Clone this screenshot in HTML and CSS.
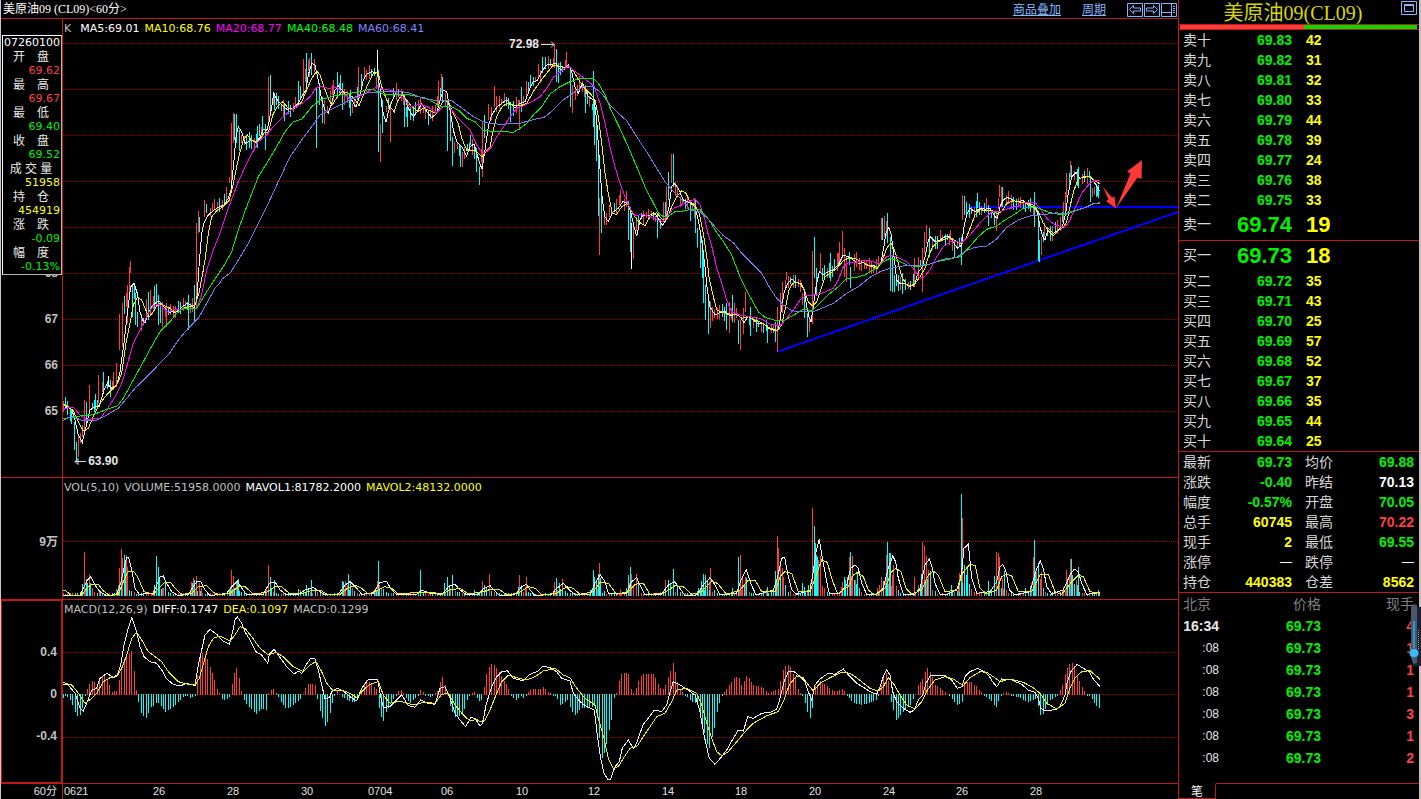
FILE: index.html
```html
<!DOCTYPE html>
<html lang="zh-CN">
<head>
<meta charset="utf-8">
<title>美原油09 (CL09)</title>
<link rel="stylesheet" href="styles.css">
</head>
<body>
<div class="app">
  <main class="charts">
    <header class="bar">
      <h1 class="bar-title">美原油09 (CL09)&lt;60分&gt;</h1>
      <nav class="bar-nav">
        <a href="#overlay">商品叠加</a>
        <a href="#period">周期</a>
        <span class="bar-buttons">
          <button type="button" class="icon-btn" aria-label="向左"><svg width="16" height="15" viewBox="0 0 16 15"><path d="M.5 1.500h15v13H.5zM2.500 7.500L6.500 3.500V6h7v3h-7v2.500z"/></svg></button>
          <button type="button" class="icon-btn" aria-label="向右"><svg width="16" height="15" viewBox="0 0 16 15"><path d="M.5 1.500h15v13H.5zM13.500 7.500L9.500 3.500V6h-7v3h7v2.500z"/></svg></button>
          <button type="button" class="icon-btn" aria-label="布局"><svg width="16" height="15" viewBox="0 0 16 15"><path d="M.5 1.500h15v13H.5zM10.500 1.500v13M.5 10.500h10M12 4.500h2M12 6.500h2M12 8.500h2M12 10.500h2"/></svg></button>
        </span>
      </nav>
    </header>

    <section class="panel panel-k">
      <div class="axis axis-k"><span>68</span><span>67</span><span>66</span><span>65</span></div>
      <div class="plot">
        <svg id="k" class="canvas" viewBox="63 19 1115 458" preserveAspectRatio="none"></svg>
        <p class="legend"><span class="dim">K</span><span class="first">MA5:69.01</span><span class="yellow">MA10:68.76</span><span class="magenta">MA20:68.77</span><span class="lime">MA40:68.48</span><span class="blue">MA60:68.41</span></p>
        <span class="mark mark-high">72.98<svg width="14" height="7" viewBox="0 0 14 7"><path d="M0 3.500h13M10 .5l3 3-3 3"/></svg></span>
        <span class="mark mark-low"><svg width="12" height="7" viewBox="0 0 12 7"><path d="M12 3.500H1M4 .5l-3 3 3 3z"/></svg>63.90</span>
      </div>
      <dl class="quote">
        <dt class="stamp">07260100</dt>
        <dt>开　盘</dt><dd class="red">69.62</dd>
        <dt>最　高</dt><dd class="red">69.67</dd>
        <dt>最　低</dt><dd class="green">69.40</dd>
        <dt>收　盘</dt><dd class="green">69.52</dd>
        <dt>成 交 量</dt><dd class="yellow">51958</dd>
        <dt>持　仓</dt><dd class="yellow">454919</dd>
        <dt>涨　跌</dt><dd class="green">-0.09</dd>
        <dt>幅　度</dt><dd class="green">-0.13%</dd>
      </dl>
    </section>

    <section class="panel">
      <div class="axis axis-vol"><span>9万</span></div>
      <div class="plot">
        <svg id="vol" class="canvas" viewBox="63 478 1115 121" preserveAspectRatio="none"></svg>
        <p class="legend"><span class="dim">VOL(5,10)</span><span class="dim">VOLUME:51958.0000</span><span>MAVOL1:81782.2000</span><span class="yellow">MAVOL2:48132.0000</span></p>
      </div>
    </section>

    <section class="panel">
      <div class="axis axis-macd"><span>0.4</span><span>0</span><span>-0.4</span></div>
      <div class="plot">
        <svg id="macd" class="canvas" viewBox="63 600 1115 183" preserveAspectRatio="none"></svg>
        <p class="legend"><span class="dim">MACD(12,26,9)</span><span>DIFF:0.1747</span><span class="yellow">DEA:0.1097</span><span class="dim">MACD:0.1299</span></p>
      </div>
    </section>

    <footer class="dates">
      <span class="dates-unit">60分</span>
      <div class="dates-row"><span>0621</span><span>26</span><span>28</span><span>30</span><span>0704</span><span>06</span><span>10</span><span>12</span><span>14</span><span>18</span><span>20</span><span>24</span><span>26</span><span>28</span></div>
    </footer>
  </main>

  <aside class="side">
    <header class="side-head">
      <h2>美原油09(CL09)</h2>
      <button type="button" class="icon-btn restore" aria-label="还原"><svg width="16" height="14" viewBox="0 0 16 14"><path d="M.5 .5h15v13H.5zM3.500 3.500h9v7h-9zM3.500 4.500h9"/></svg></button>
    </header>
    <div class="ratio"><span class="ratio-sell"></span><span class="ratio-buy"></span></div>

    <table class="book">
      <tbody>
        <tr><th>卖十</th><td>69.83</td><td>42</td></tr>
        <tr><th>卖九</th><td>69.82</td><td>31</td></tr>
        <tr><th>卖八</th><td>69.81</td><td>32</td></tr>
        <tr><th>卖七</th><td>69.80</td><td>33</td></tr>
        <tr><th>卖六</th><td>69.79</td><td>44</td></tr>
        <tr><th>卖五</th><td>69.78</td><td>39</td></tr>
        <tr><th>卖四</th><td>69.77</td><td>24</td></tr>
        <tr><th>卖三</th><td>69.76</td><td>38</td></tr>
        <tr><th>卖二</th><td>69.75</td><td>33</td></tr>
        <tr class="top"><th>卖一</th><td>69.74</td><td>19</td></tr>
      </tbody>
    </table>
    <table class="book">
      <tbody>
        <tr class="top"><th>买一</th><td>69.73</td><td>18</td></tr>
        <tr><th>买二</th><td>69.72</td><td>35</td></tr>
        <tr><th>买三</th><td>69.71</td><td>43</td></tr>
        <tr><th>买四</th><td>69.70</td><td>25</td></tr>
        <tr><th>买五</th><td>69.69</td><td>57</td></tr>
        <tr><th>买六</th><td>69.68</td><td>52</td></tr>
        <tr><th>买七</th><td>69.67</td><td>37</td></tr>
        <tr><th>买八</th><td>69.66</td><td>35</td></tr>
        <tr><th>买九</th><td>69.65</td><td>44</td></tr>
        <tr><th>买十</th><td>69.64</td><td>25</td></tr>
      </tbody>
    </table>
    <table class="stats">
      <tbody>
        <tr><th>最新</th><td class="green">69.73</td><th>均价</th><td class="green">69.88</td></tr>
        <tr><th>涨跌</th><td class="green">-0.40</td><th>昨结</th><td>70.13</td></tr>
        <tr><th>幅度</th><td class="green">-0.57%</td><th>开盘</th><td class="green">70.05</td></tr>
        <tr><th>总手</th><td class="yellow">60745</td><th>最高</th><td class="red">70.22</td></tr>
        <tr><th>现手</th><td class="yellow">2</td><th>最低</th><td class="green">69.55</td></tr>
        <tr><th>涨停</th><td class="none">—</td><th>跌停</th><td class="none">—</td></tr>
        <tr><th>持仓</th><td class="yellow">440383</td><th>仓差</th><td class="yellow">8562</td></tr>
      </tbody>
    </table>
    <div class="ticks-wrap">
      <table class="ticks">
        <thead><tr><th>北京</th><th>价格</th><th>现手</th></tr></thead>
        <tbody>
          <tr><td class="full">16:34</td><td>69.73</td><td>4</td></tr>
          <tr><td>:08</td><td>69.73</td><td>1</td></tr>
          <tr><td>:08</td><td>69.73</td><td>1</td></tr>
          <tr><td>:08</td><td>69.73</td><td>1</td></tr>
          <tr><td>:08</td><td>69.73</td><td>3</td></tr>
          <tr><td>:08</td><td>69.73</td><td>1</td></tr>
          <tr><td>:08</td><td>69.73</td><td>2</td></tr>
        </tbody>
      </table>
      <svg class="gauge" width="12" height="62" viewBox="0 0 12 62" aria-hidden="true">
        <path d="M7 3h5v59H4z" fill="#1d2233"/>
        <path d="M2 3l3-3 3 1v58l-4 1-2-6z" fill="#4d5666"/>
        <path d="M9.500 26v20" stroke="#9aa85a" stroke-dasharray="1 1"/>
        <path d="M5 17v28" stroke="#1e9be8" stroke-width="2"/>
        <circle cx="5" cy="49" r="5" fill="#2a6f98"/><circle cx="5" cy="49" r="4" fill="#3fbdf2"/>
      </svg>
    </div>
    <div class="tabs"><button type="button" class="tab">笔</button><span class="tabs-line"></span></div>
  </aside>
</div>
<script src="chart.js"></script>
</body>
</html>
```
FILE: styles.css
```css
* { box-sizing: border-box; }
body { margin: 0; background: #000; color: #fff; font-family: "DejaVu Sans", "Noto Sans CJK SC", sans-serif; font-size: 11px; }
h1, h2, p, dl, dd { margin: 0; font-weight: 400; }
button { font: inherit; color: inherit; background: none; border: 0; padding: 0; cursor: pointer; }
.dim { color: #c0c0c0; }
.yellow { color: #ff0; }
.magenta { color: #f0f; }
.lime { color: #0f0; }
.green { color: #00f000; }
.blue { color: #8080ff; }
.red { color: #ff4040; }

.app { display: grid; grid-template-columns: minmax(0, 1fr) 240px; min-height: 100vh; border-left: 1px solid #c8c8c8; border-right: 2px solid #c9bfbf; }

.charts { display: grid; grid-template-rows: 19px minmax(0, 459fr) minmax(0, 122fr) minmax(0, 184fr) 15px; border-right: 1px solid #c01818; }
.bar { display: flex; justify-content: space-between; align-items: center; padding-left: 2px; border-bottom: 1px solid #c01818; line-height: 18px; }
.bar-title { font-family: "Liberation Serif", "Noto Sans CJK SC", serif; font-size: 12px; }
.bar-nav { display: flex; align-items: center; gap: 21px; font-family: "Noto Sans CJK SC", sans-serif; font-size: 12px; }
.bar-nav a { color: #80b8ff; }
.bar-buttons { display: flex; gap: 1px; padding-right: 1px; }
.icon-btn { display: block; }
.icon-btn svg { display: block; fill: none; stroke: #80b8ff; }

.panel { position: relative; display: grid; grid-template-columns: 62px minmax(0, 1fr); border-bottom: 1px solid #c01818; }
.axis { display: grid; justify-items: end; align-items: center; padding-right: 4px; border-right: 1px solid #c01818; color: #c0c0c0; font: bold 12px/1 "Liberation Sans", "Noto Sans CJK SC", sans-serif; }
.axis-k { grid-template-rows: repeat(4, 46fr) 43fr; padding-top: 231px; }
.axis-vol { grid-template-rows: 54fr 20fr 47fr; }
.axis-vol span { grid-row: 2; }
.axis-macd { grid-template-rows: 30fr 42fr 42fr 42fr 25fr; border: 1px solid #c01818; border-right-width: 2px; }
.axis-macd span:nth-child(1) { grid-row: 2; }
.axis-macd span:nth-child(2) { grid-row: 3; }
.axis-macd span:nth-child(3) { grid-row: 4; }
.plot { position: relative; overflow: hidden; }
.canvas { position: absolute; inset: 0; width: 100%; height: 100%; shape-rendering: crispEdges; fill: none; }
.canvas path { vector-effect: non-scaling-stroke; }
.legend { position: relative; display: flex; gap: 5px; padding-left: 1px; line-height: 19px; white-space: nowrap; }
.legend .first { padding-left: 4px; }
.mark { position: absolute; display: flex; align-items: center; gap: 2px; color: #e8e8e8; font: bold 12px/14px "Liberation Sans", sans-serif; }
.mark svg { fill: none; stroke: #d8d8d8; }
.mark-high { left: 40%; top: 4%; }
.mark-low { left: 1%; top: 95%; }

.grid { stroke: #a80000; stroke-dasharray: 1 1; }
.up { stroke: #ff3c3c; }
.down { stroke: #0ff; }
.flat { stroke: #fff; }
.l-white { stroke: #eee; }
.l-yellow { stroke: #f0f000; }
.l-magenta { stroke: #f0f; }
.l-green { stroke: #0e0; }
.l-blue { stroke: #7878f0; }
.trend { stroke: #00f; stroke-width: 2; }
.arrow { fill: #ff3838; shape-rendering: auto; }

.quote { position: absolute; left: 1px; top: 16px; width: 60px; padding: 0 1px; background: #000; border: 1px solid; border-color: #fff #b8b8b0 #b8b8b0 #fff; line-height: 14px; }
.quote dt { text-align: center; color: #e8e8e8; font-family: "Liberation Sans", "Noto Sans CJK SC", sans-serif; font-size: 12px; padding-right: 2px; }
.quote dd { text-align: right; }
.quote .stamp { font-family: "DejaVu Sans", sans-serif; font-size: 11px; padding: 0; color: #fff; }

.dates { display: grid; grid-template-columns: 62px minmax(0, 1fr); font: 11px/14px "Liberation Sans", "Noto Sans CJK SC", sans-serif; color: #e0e0e0; }
.dates-unit { text-align: right; padding-right: 5px; border-right: 1px solid #c01818; }
.dates-row { display: grid; grid-template-columns: 89fr 74fr 74fr 67fr 73fr 75fr 72fr 74fr 73fr 74fr 74fr 73fr 74fr 148fr; padding-left: 1px; }
.dates-row span { min-width: 0; }

.side { display: flex; flex-direction: column; font-family: "Noto Sans CJK SC", sans-serif; font-size: 14px; }
.side-head { position: relative; height: 24px; }
.side-head h2 { font: 20px/26px "Liberation Serif", "Noto Sans CJK SC", serif; color: #d8d800; text-align: center; padding-right: 12px; height: 24px; }
.restore { position: absolute; right: 2px; top: 1px; }
.ratio { display: flex; height: 6px; padding-right: 2px; padding-left: 1px; border-top: 1px solid #c01818; border-bottom: 1px solid #c01818; }
.ratio-sell { flex: 125; background: #ff3c3c; }
.ratio-buy { flex: 113; background: #00e000; }
table { width: 100%; table-layout: fixed; border-collapse: separate; border-spacing: 0; }
th, td { padding: 0; height: 20px; line-height: 20px; white-space: nowrap; }
th { font-weight: 400; text-align: left; vertical-align: top; color: #d8d8d8; line-height: 18px; }
td { font-family: "Liberation Sans", sans-serif; font-weight: 700; text-align: right; }
.book, .stats { border-bottom: 1px solid #c01818; }
.book th:first-child, .stats th:first-child { width: 45px; padding-left: 4px; }
.book td:nth-child(2), .stats td:nth-child(2) { width: 68px; }
.book td:nth-child(2) { color: #00f000; }
.book td:nth-child(3) { color: #ff0; text-align: left; padding-left: 14px; }
.book .top th, .book .top td { height: 30px; }
.book .top th { line-height: 27px; }
.book .top td { font-size: 22px; line-height: 30px; }
.stats th:nth-child(3) { width: 55px; padding-left: 13px; }
.stats td:last-child { padding-right: 5px; }
.stats .none { font-weight: 400; font-size: 12px; }

.ticks-wrap { position: relative; flex: 1; min-height: 190px; }
.ticks th, .ticks td { height: 22px; line-height: 22px; }
.ticks th { color: #808080; text-align: right; line-height: 20px; }
.ticks th:first-child { width: 40px; text-align: left; padding-left: 4px; }
.ticks th:nth-child(2) { width: 102px; }
.ticks td:first-child { font: 12px/22px "Liberation Sans", sans-serif; color: #e8e8e8; }
.ticks .full:first-child { font: bold 14px/22px "Liberation Sans", sans-serif; }
.ticks td:nth-child(2) { color: #00f000; }
.ticks td:nth-child(3) { color: #ff4040; }
.ticks th:nth-child(3), .ticks td:nth-child(3) { padding-right: 5px; }
.gauge { position: absolute; right: -2px; top: 11px; }

.tabs { display: flex; height: 16px; }
.tab { width: 37px; border: 1px solid #c01818; border-top: 0; border-left: 0; border-top-right-radius: 3px; font-size: 12px; line-height: 14px; color: #fff; }
.tabs-line { flex: 1; border-top: 1px solid #c01818; }
```
FILE: chart.js
```js
// Series are stored in thirds of a unit, in segments: [originX, originY, "x,y x,y ..."].
function join(segments) {
  let out = [];
  for (const [ox, oy, list] of segments) {
    const pts = list.trim().split(/\s+/).map(p => p.split(',').map(Number)).map(([x, y]) => [ox + x / 3, oy + y / 3]);
    out = out.filter(p => p[0] < pts[0][0]).concat(pts);
  }
  return out;
}
function spikes(segments) {
  return segments.flatMap(([ox, oy, list]) => list.trim().split(/\s+/).map(p => {
    const [x, a, b] = p.split(',').map(Number);
    return [Math.floor(ox + x / 3), oy + a / 3, oy + (b === undefined ? 362 : b) / 3];
  }));
}
function at(pts, x) {
  for (let i = 1; i < pts.length; i++) {
    if (pts[i][0] >= x) {
      const [a, b] = [pts[i - 1], pts[i]];
      return a[1] + (b[1] - a[1]) * (x - a[0]) / ((b[0] - a[0]) || 1);
    }
  }
  return pts[pts.length - 1][1];
}
let seed = 11;
function rand() { seed = (seed * 1103515245 + 12345) % 2147483648; return seed / 2147483648; }
function add(svg, cls, d) {
  const p = document.createElementNS('http://www.w3.org/2000/svg', 'path');
  p.setAttribute('class', cls);
  p.setAttribute('d', d);
  svg.appendChild(p);
}
const bars = list => list.map(([x, a, b]) => `M${x + 0.5} ${Math.round(a)}V${Math.round(b)}`).join('');
const line = pts => 'M' + pts.map(p => p[0].toFixed(1) + ' ' + p[1].toFixed(1)).join('L');
const hline = ys => ys.map(y => `M63 ${y + 0.5}H1178`).join('');

// Price panel
const ma5 = join([
[0,240,'187,512 200,500 215,508 225,540 235,585 247,607 258,560 270,510 285,500 297,500 305,475 312,450 322,430 335,445 350,435 360,395 372,310 382,220 392,140 402,130 412,160 420,215 428,240 435,250 445,220 455,200 465,190 475,183 485,190 495,205 505,218 515,215 525,218 540,208 550,198 562,190 572,195 582,205 590,180 596,100'],
[0,0,'597,800 605,700 612,668 625,645 640,632 655,622 672,615 685,595 693,570 702,480 708,410 715,380 725,395 735,430 745,425 755,420 768,427 780,412 790,388 800,392 806,370 815,320 821,280 832,300 845,315 860,328 880,325 895,310 905,290 918,270 925,225 935,190 945,195 955,240 965,300 975,330 985,340 995,310 1005,270 1015,258 1030,275 1045,295 1055,300 1068,320'],
[350,20,'18,262 30,225 40,180 50,162 65,155 82,158 90,205 97,270 108,307 115,275 125,245 140,215 155,215 165,235 175,265 190,290 205,270 215,250 230,275 245,293 260,280 270,240 280,210 290,215 300,270 310,330 320,365 335,380 350,408 360,380 372,372 380,400 388,425 396,448 405,390 415,320 425,285 440,262 455,250 470,240 480,250 495,265 510,250 525,245 540,205 550,185 562,182 575,155 590,135 605,133 618,130 630,148 642,150 655,135 665,155 675,200 685,220 697,190 705,205 715,230 732,240 740,300 748,420 757,540 765,590 775,605 790,575 805,565 818,545 832,548 842,575 852,620 860,648 870,600 880,585 895,588 912,578 925,595 937,617 948,600 957,560 965,500 972,490 985,505 1000,540 1020,548 1035,560 1045,600 1055,660 1065,740'],
[690,140,'45,380 52,450 60,500 75,525 90,518 105,515 120,528 135,522 150,530 162,548 175,528 190,540 205,552 220,550 235,565 250,570 262,572 268,555 275,500 283,455 293,430 305,418 320,428 332,432 342,450 350,500 357,530 363,545 370,500 378,440 388,395 400,405 415,395 430,390 445,375 460,345 475,350 490,360 505,370 520,368 535,378 550,375 562,385 572,370 580,330 588,280 596,262 604,285 612,350 620,420 630,430 645,430 660,440 675,430 685,395 695,385 705,350 713,310 720,290 735,305 750,300 765,290 780,290 792,310 803,325 815,315 822,260 830,225 840,205 855,215 870,205 885,208 900,205 915,230 922,235 930,200 940,180 950,172 965,178 980,185 1000,182 1015,195 1030,200 1042,215 1050,260 1058,290 1065,300 1075,265 1090,280 1105,270 1118,255 1127,220 1135,160 1145,110 1158,97 1170,115 1185,112 1200,108 1212,125 1228,152']]);
const ma10 = join([
[0,240,'187,492 205,500 220,512 232,540 250,573 265,565 280,530 300,490 320,465 350,435 365,400 378,310 390,250 400,195 412,172 425,180 435,205 447,232 460,215 475,190 490,195 510,205 530,220 550,205 570,200 585,195 597,160 610,90 613,70'],
[0,0,'615,780 625,700 635,650 650,632 670,620 688,600 698,560 708,510 718,465 730,420 742,405 755,422 775,425 795,395 805,400 818,345 832,320 848,305 865,325 885,325 905,305 920,270 935,235 950,213 960,225 972,260 985,295 995,317 1005,300 1025,275 1045,280 1065,298 1078,295'],
[350,20,'27,258 40,225 55,190 70,160 85,158 95,200 110,240 120,260 133,275 142,245 155,225 170,240 185,260 205,275 220,265 240,272 260,280 275,250 285,240 297,248 310,280 325,310 335,355 350,390 365,390 380,395 396,410 408,395 420,380 430,330 440,290 455,262 470,250 490,255 510,258 530,250 550,215 570,185 590,160 610,135 630,140 650,142 665,145 680,170 700,200 720,220 735,240 745,290 755,370 765,460 775,520 787,580 800,583 815,560 832,550 845,575 865,605 885,617 900,590 920,578 935,597 950,600 965,560 980,530 995,512 1008,520 1020,545 1035,555 1048,580 1060,640 1070,710 1077,770'],
[690,140,'60,425 70,470 80,510 100,518 120,522 140,522 155,535 175,530 195,540 215,548 235,562 262,572 275,555 287,500 297,450 308,430 320,427 335,432 345,455 355,485 367,498 380,485 392,450 405,410 420,400 440,385 460,362 480,352 500,358 520,368 540,378 560,385 575,365 590,325 603,308 615,335 625,370 635,410 650,435 670,438 690,410 705,385 715,350 728,320 745,305 765,297 780,292 800,305 815,312 830,290 842,260 855,225 870,208 885,212 905,210 920,220 935,215 950,190 970,182 990,187 1010,190 1030,195 1045,215 1060,250 1075,272 1090,288 1105,272 1120,262 1130,245 1140,200 1152,150 1165,118 1180,110 1200,110 1212,120 1230,132']]);
const ma20 = join([
[0,240,'187,510 205,502 222,503 240,525 260,540 280,535 300,535 320,510 345,470 365,430 380,380 400,310 425,260 445,220 460,198 475,192 490,205 505,217 520,210 545,207 570,206 590,205 605,165'],
[0,0,'620,810 640,750 660,700 685,625 715,545 745,480 775,425 800,405 820,380 850,350 880,325 910,308 930,290 950,262 965,260 985,265 1010,262 1030,280 1050,298 1078,297'],
[350,20,'27,230 50,215 70,208 82,197 95,208 110,208 135,215 160,235 180,262 210,252 235,262 260,278 280,258 300,262 320,290 340,310 360,330 380,375 396,398 410,395 425,380 440,350 460,322 480,290 500,265 520,258 545,245 570,230 590,205 610,172 630,155 655,138 670,150 690,165 715,185 732,198 750,250 765,310 780,380 795,440 810,490 825,530 840,565 855,587 880,583 905,592 920,598 937,605 955,585 970,565 990,557 1010,548 1035,537 1050,555 1065,600 1076,650'],
[690,140,'57,290 68,330 80,385 95,430 110,480 125,515 150,525 180,530 210,535 240,552 270,557 290,535 310,510 330,480 350,465 370,465 400,458 430,445 445,420 460,380 475,368 500,368 520,360 550,365 570,372 590,350 605,345 630,355 650,365 670,385 690,415 702,412 720,390 740,350 760,320 785,303 815,308 840,285 865,255 885,235 905,215 930,215 950,207 985,198 1005,188 1035,187 1050,205 1070,235 1095,255 1125,262 1140,240 1155,205 1175,160 1195,135 1215,120 1230,120']]);
const ma40 = join([
[0,240,'187,542 210,532 240,528 265,527 290,520 320,508 352,498 370,475 400,420 430,365 460,310 480,275 510,245 530,220 550,205 590,205 620,155 640,125'],
[0,0,'643,840 670,800 695,755 715,690 740,620 775,530 800,490 830,440 855,395 880,365 905,358 935,320 960,300 1000,288 1040,282'],
[350,20,'0,220 30,215 65,207 100,222 140,222 180,225 230,235 270,258 300,258 325,270 350,295 375,305 400,330 430,335 460,333 488,338 510,325 530,310 550,285 575,260 600,222 630,200 660,185 690,175 730,175 745,190 765,225 785,275 805,315 830,370 860,440 885,500 905,540 925,578 940,590 955,588 975,575 1010,572'],
[690,140,'0,208 30,208 57,240 75,270 100,305 125,345 150,410 180,470 205,515 225,532 260,542 285,540 320,520 340,508 365,512 390,490 420,460 445,440 470,415 500,412 525,405 550,390 580,365 600,355 625,362 650,375 680,380 710,375 740,365 780,357 810,350 835,325 865,290 890,268 920,258 945,240 975,222 1000,205 1035,200 1055,208 1075,217 1100,222 1130,222 1155,213 1185,203 1210,192 1230,188']]);
const ma60 = join([
[0,240,'187,538 210,532 230,535 250,543 290,541 320,525 355,505 380,475 405,445 440,410 475,375 505,345 535,300 565,265 595,235 620,190 645,145 660,128'],
[0,0,'665,838 690,820 715,780 745,730 775,670 805,610 835,545 870,470 905,420 935,380 960,345 1000,325 1040,305 1078,295'],
[350,20,'27,225 60,217 110,215 150,213 180,220 220,235 260,242 305,242 330,260 370,290 405,308 450,313 510,310 545,300 583,292 610,270 640,240 670,218 700,200 730,200 755,220 780,255 805,280 830,302 860,350 890,395 920,445 945,485 975,520 1005,550'],
[690,140,'0,210 30,215 57,240 75,260 100,287 130,308 155,340 185,370 215,400 240,445 260,475 280,495 305,512 340,516 370,515 395,505 430,490 470,460 505,440 540,412 570,395 600,385 640,378 690,376 720,372 760,358 800,352 830,332 855,322 890,318 920,297 950,262 985,240 1020,228 1060,224 1100,218 1120,222 1150,213 1185,203 1210,190 1230,190']]);
const up = spikes([
[0,240,'388,80,180 391,62,100 358,222,330 367,190,320 380,160,200 268,435,520 253,480,580 295,405,490 340,395,450 349,370,440 235,585,650 382,135,250 451,150,225 439,178,240 487,185,262 499,190,262 590,0,200'],
[0,0,'589,670,840 595,633,700 613,600,650 643,598,630 679,562,600 694,368,575 700,340,430 805,232,370 910,178,290 928,175,230 943,178,215 1075,200,300 1000,240,300 973,300,372'],
[350,20,'25,140,200 91,312,425 121,245,365 265,183,260 274,162,215 433,198,260 397,305,470 387,455,490 508,240,330 613,72,145 649,96,140 667,195,278 748,535,705 530,183,235 571,150,190 850,615,718 811,510,550 940,545,605 949,498,590 964,402,490 415,252,300 1042,635,685 829,512,560 337,395,440 313,365,400'],
[690,140,'14,175,235 61,485,565 118,485,580 133,488,550 151,540,630 160,505,582 166,455,515 262,500,636 271,460,530 289,395,420 277,425,520 367,333,552 391,340,395 457,272,350 448,305,370 463,325,412 469,350,425 499,335,380 574,235,300 583,228,290 358,530,575 445,340,370 697,325,456 709,255,310 703,275,340 817,165,240 673,355,440 685,350,420 781,270,300 889,175,215 928,135,170 919,215,272 934,142,200 1054,292,345 1064,250,290 1129,98,170 1126,155,220 1120,185,240 1141,63,110 1153,92,120 1207,145,172 1213,140,165']]);
const down = spikes([
[0,240,'222,545,630 229,605,665 213,510,552 196,470,500 310,396,455 374,168,222 397,135,230 406,160,255 412,215,262 445,155,240 463,138,212 469,132,200 475,165,255 481,190,250 565,165,270 583,135,245 259,485,555 331,420,470 286,462,510'],
[0,0,'598,650,697 619,612,640 703,342,420 709,342,430 718,390,453 772,378,445 787,348,410 796,372,450 811,225,345 823,280,330 895,243,310 919,160,260 934,160,225 949,260,443 958,250,315 967,290,370 1012,215,290 1021,225,270 1027,250,330 1051,270,348 853,310,362'],
[350,20,'85,150,395 97,240,338 163,225,322 172,240,322 277,170,250 292,245,392 301,260,362 307,350,437 331,375,440 379,385,455 388,440,495 403,285,355 361,345,375 481,245,305 514,200,275 577,110,160 619,87,185 625,130,190 661,140,262 706,195,278 730,153,320 733,240,375 739,285,422 745,405,588 754,500,640 835,542,660 841,560,695 922,580,655 955,455,540 970,402,500 1021,545,602 1036,540,640 1051,630,742 1059,690,780'],
[690,140,'17,200,278 23,265,322 31,280,385 37,300,415 40,390,488 47,435,540 55,480,582 109,490,570 127,465,545 145,540,612 181,500,588 232,555,608 256,545,605 352,520,590 343,460,535 373,290,415 379,385,468 421,340,422 481,380,443 592,220,310 601,290,452 607,345,455 613,405,455 637,400,462 577,235,300 718,265,350 793,300,355 814,290,375 823,168,225 862,160,205 829,185,235 895,195,258 937,140,200 1033,155,260 1046,220,362 1048,300,365 1165,82,145 1144,75,110 1201,110,185 1198,92,115 1225,135,175 1222,138,168']]);
const flat = spikes([[0,240,'325,408,440'],[350,20,'82,90,155 844,610,748']]);

const steps = [];
for (let i = 0; 63 + i * 2.45 < 1100; i++) steps.push(Math.floor(63 + i * 2.45));
const taken = new Set([...up, ...down, ...flat].map(b => b[0]));
for (const x of steps) {
  const mid = at(ma5, x + 3), slope = Math.abs(at(ma5, x + 3) - at(ma5, x - 1));
  const top = mid - 2 - rand() * 7, bottom = mid + 2 + rand() * 7, rising = rand() > 0.5;
  if (taken.has(x) || taken.has(x - 1) || slope > 20) continue;
  (rising ? up : down).push([x, top, bottom]);
}
const k = document.getElementById('k');
add(k, 'grid', hline([43, 89, 135, 181, 227, 273, 319, 365, 411]));
add(k, 'trend', 'M970 207H1178M778 351.500L1178 212');
add(k, 'up', bars(up));
add(k, 'down', bars(down));
add(k, 'flat', bars(flat));
add(k, 'l-white', line(ma5));
add(k, 'l-yellow', line(ma10));
add(k, 'l-magenta', line(ma20));
add(k, 'l-green', line(ma40));
add(k, 'l-blue', line(ma60));
add(k, 'arrow', 'M1103 187L1112 197.500L1114.500 196.500L1116 208.500L1106 201L1108.500 199.500ZM1116 208.500L1130.500 173.500L1127 171.500L1142 160L1141.500 179L1137.500 177.500Z');

// Volume panel
const volUp = spikes([
[0,475,'253,231 268,297 355,330 358,278 364,222 367,248 379,240 382,275 388,345 487,340 574,322 580,308 589,303 598,325 604,340 695,285 700,303 709,325 799,335 805,270 901,345 1132,318 1126,340 1138,330 1144,340 1036,318 1042,330'],
[480,475,'7,318 28,297 118,300 139,306 136,335 223,321 247,312 358,264 421,342 454,297 469,297 448,325 460,330 556,315 565,330 691,279 688,320 781,240 775,335 787,310 796,305 859,342 892,183 895,220 901,260 907,278 997,99 1015,255 1021,243'],
[820,475,'0,243 97,243 88,247 106,315 184,306 196,315 199,240 220,270 217,300 178,330 172,340 307,201 313,213 319,243 283,306 325,285 418,294 427,129 415,320 529,231 535,234 538,247 547,312 640,246 664,291 649,290 634,325 739,285 751,252 769,315 748,300 730,335 64,335 67,321 295,330']]);
const volDown = spikes([
[0,475,'247,327 259,312 262,325 271,325 301,348 352,345 373,240 376,260 463,330 469,243 475,276 478,310 496,318 583,315 577,325 712,320 715,312 691,340 811,306 823,315 796,345 919,330 934,315 895,342 1027,318 1030,322 1045,297 1051,318 1135,258 1261,285 1342,306 1357,300 1333,325 1348,330 1423,345'],
[480,475,'13,330 19,340 124,330 115,335 229,309 238,325 340,285 343,305 355,297 349,320 361,310 331,345 445,300 451,276 475,320 439,340 580,282 565,315 571,325 592,330 664,318 670,297 676,300 682,315 655,340 775,246 799,310 793,330 757,340 886,288 862,335 880,340 889,320 1003,153 1006,205 1009,240 1012,247 991,325 985,330 967,325 973,335'],
[820,475,'91,231 82,306 73,306 76,315 112,291 202,201 208,234 211,234 190,318 304,297 331,288 322,312 424,57 433,270 442,276 439,300 394,330 553,288 523,303 505,318 643,195 646,290 655,270 754,252 775,276 742,320 616,340 835,345 757,300']]);
const volFast = join([
[0,475,'187,362 240,362 255,330 265,312 273,305 285,330 300,350 320,362 350,358 362,325 372,280 380,248 386,248 395,285 405,340 418,358 460,355 470,330 480,305 490,303 500,325 515,350 535,362 565,358 580,335 592,318 602,318 615,345 630,362 680,355 695,335 712,318 722,335 740,360 790,358 808,325 825,320 840,345 860,360 895,358 915,345 940,338 960,350 975,360 1015,358 1035,330 1050,320 1070,340 1085,358 1120,355 1140,322 1160,320 1175,345 1190,360 1250,358 1265,345 1290,355 1330,355 1345,335 1365,328 1380,345 1400,360 1435,358 1450,342 1470,332 1485,348 1499,362'],
[480,475,'60,362 90,362 110,355 125,335 140,328 150,345 165,362 215,358 230,340 250,325 268,345 285,358 330,358 345,325 361,300 375,320 385,355 440,355 455,320 470,308 482,335 495,360 545,358 565,330 583,320 600,340 615,362 650,360 670,330 690,308 705,330 720,360 770,355 785,310 799,285 812,325 828,360 880,345 892,310 905,250 914,247 922,290 935,345 950,358 990,345 1000,290 1008,230 1018,193 1028,255 1045,345'],
[820,475,'28,355 60,355 80,330 92,280 105,270 115,280 125,325 140,358 165,360 190,340 205,280 218,243 227,260 235,310 250,358 285,357 300,340 315,270 328,252 336,275 345,325 360,357 385,357 415,340 425,290 432,220 445,208 455,310 470,355 510,350 530,320 540,275 548,268 557,285 568,345 585,360 630,350 650,280 661,258 670,280 680,335 695,357 730,345 750,300 763,282 775,290 785,325 800,358 840,353']]);
const volSlow = join([
[0,475,'187,345 197,347 215,362 245,360 265,335 278,327 295,327 310,348 330,362 355,358 370,320 385,290 402,290 415,310 432,350 460,358 480,335 495,322 512,322 525,340 545,358 575,355 595,335 620,332 635,348 655,360 690,355 715,335 735,335 760,357 800,352 825,335 845,335 870,357 910,355 940,345 960,345 985,360 1020,358 1045,338 1070,332 1085,340 1105,357 1135,345 1155,335 1175,340 1195,357 1255,352 1305,353 1320,360 1350,345 1380,340 1405,357 1450,350 1475,342'],
[480,475,'40,342 60,345 80,360 115,355 145,335 165,340 185,360 230,355 260,335 280,340 300,358 340,350 360,322 385,325 410,358 445,350 465,328 490,325 510,358 550,355 585,332 610,335 635,358 665,350 695,318 712,325 740,358 780,345 805,315 825,315 845,350 885,350 900,305 915,290 935,295 955,350 990,350 1005,310 1025,255 1042,262 1055,310 1070,350'],
[820,475,'55,355 85,335 100,300 113,292 130,305 145,345 165,360 195,340 215,290 228,280 243,290 258,340 275,357 305,345 325,300 340,288 355,300 375,350 410,345 430,290 450,268 466,272 480,340 500,357 530,345 545,305 560,298 575,302 595,350 635,350 660,300 685,298 705,350 725,358 755,320 775,300 790,305 810,350 840,355']]);
for (const x of steps) {
  const lift = Math.max(0, 594 - at(volFast, x + 3)) * (0.1 + rand() * 0.5);
  (rand() > 0.5 ? volUp : volDown).push([x, 594.5 - rand() * 2 - lift, 596]);
}
const vol = document.getElementById('vol');
add(vol, 'grid', hline([541]));
add(vol, 'up', bars(volUp));
add(vol, 'down', bars(volDown));
add(vol, 'l-white', line(volFast));
add(vol, 'l-yellow', line(volSlow));

// MACD panel
const hist = join([
[0,475,'187,670 197,662 210,675 225,712 234,728 243,715 252,670 258,650 272,615 290,628 307,600 320,610 335,650 350,648 358,610 370,555 385,540 393,527 400,570 408,645 411,662 418,705 435,735 450,700 472,680 495,710 520,695 555,660 572,670 585,660 592,590 600,545 610,527 625,560 650,640 668,675 685,672 692,655 700,600 708,580 717,610 725,660 740,690 768,717 785,700 800,705 803,655 820,640 830,658 855,700 875,695 890,680 900,672 910,655 920,625 945,630 952,680 965,725 976,755 990,715 1000,662 1010,648 1022,662 1035,672 1060,682 1075,665 1085,635 1100,612 1115,630 1130,645 1137,700 1147,745 1160,705 1180,670 1200,640 1215,665 1230,685 1250,665 1262,642 1275,658 1290,665 1310,650 1328,600 1340,650 1352,700 1363,728 1385,720 1405,665 1420,648 1440,685'],
[480,475,'7,665 14,625 20,585 35,563 50,580 65,605 80,630 90,660 107,675 120,662 130,670 140,655 155,640 170,645 190,637 210,655 225,662 240,690 262,675 282,725 300,700 330,700 347,690 358,800 367,855 380,800 395,725 403,662 412,645 420,600 435,592 447,600 455,657 465,650 475,615 490,595 520,597 545,650 560,620 572,580 577,555 585,590 595,640 610,655 620,665 640,685 650,680 665,740 677,800 688,822 700,770 715,690 725,660 740,640 760,610 775,603 785,635 800,597 820,632 845,635 865,655 885,645 892,652 905,595 918,567 930,575 945,610 955,645 965,662 975,685 987,738 995,710 1000,655 1005,632 1018,625'],
[820,475,'0,618 15,630 45,650 68,640 80,662 100,685 125,690 150,682 170,675 178,650 190,605 199,592 208,640 214,690 228,735 245,715 270,690 283,665 290,635 305,615 320,578 330,590 345,630 375,650 390,665 410,692 428,680 430,620 450,620 470,635 490,660 505,670 528,697 540,660 555,650 575,662 600,668 622,682 650,670 657,710 664,732 672,710 685,680 710,662 725,635 740,580 751,558 763,575 775,615 795,655 810,662 825,690 840,700']]);
const diff = join([
[0,475,'187,628 205,630 225,655 240,700 250,708 262,680 275,645 290,640 300,610 320,595 340,607 352,600 362,570 372,510 382,470 395,428 405,455 412,480 420,515 432,545 450,560 470,565 485,585 500,612 520,628 540,633 560,625 585,632 595,570 605,525 615,480 630,463 650,478 668,498 688,508 697,475 705,435 712,425 725,445 735,470 750,495 768,530 785,540 803,565 808,538 822,523 835,540 860,575 882,597 895,588 905,595 918,570 932,550 945,552 955,585 965,630 975,672 988,668 995,650 1012,640 1030,648 1050,665 1070,678 1085,640 1105,613 1133,612 1140,655 1150,697 1170,695 1190,675 1205,660 1215,675 1225,692 1245,697 1262,675 1285,685 1305,688 1320,640 1335,635 1350,670 1365,715 1380,735 1397,755 1412,728 1425,730'],
[480,475,'0,753 8,745 18,690 35,635 50,605 65,590 82,587 100,610 130,618 150,598 175,588 190,573 210,578 230,590 245,610 270,618 280,655 300,680 320,695 343,705 352,780 362,850 372,895 385,915 392,912 405,875 418,860 427,820 445,795 460,820 470,805 480,775 490,748 505,730 523,705 545,710 560,690 570,650 580,620 600,630 625,645 645,660 660,710 672,780 688,850 705,868 725,845 740,825 760,790 775,765 790,768 803,725 820,730 845,715 870,712 890,703 900,670 912,620 925,590 940,588 955,600 975,620 985,650 995,675 1005,630'],
[820,475,'0,612 25,595 45,598 70,582 90,605 110,625 135,640 150,650 170,658 180,635 190,605 200,585 210,600 218,650 230,680 250,700 270,712 283,705 295,675 308,660 318,625 330,603 375,602 395,615 412,640 426,635 435,605 450,590 473,580 490,588 505,600 518,620 530,635 545,612 575,615 605,628 625,645 645,652 655,670 662,700 675,708 710,703 722,690 735,660 742,620 752,590 772,568 790,580 808,590 818,610 840,635']]);
const dea = join([
[0,475,'187,622 215,630 232,650 255,685 275,670 290,655 310,620 330,608 350,605 365,580 380,540 395,490 410,472 425,495 445,530 465,545 485,560 505,590 535,620 560,627 585,630 598,610 612,560 625,515 640,490 660,483 690,498 705,480 720,455 735,460 755,485 780,520 805,540 828,532 850,545 880,575 910,590 930,570 948,560 965,590 980,625 1000,648 1025,645 1050,655 1070,668 1090,645 1110,628 1135,620 1150,660 1170,685 1200,678 1240,690 1270,682 1305,685 1325,658 1345,655 1365,690 1390,720 1410,738 1430,733'],
[480,475,'0,740 15,735 30,705 50,655 65,620 85,600 110,608 140,615 165,605 190,588 225,580 250,600 270,608 290,640 315,670 345,690 355,730 372,790 385,850 400,880 415,875 430,850 450,820 470,815 490,785 510,755 530,725 555,715 575,680 590,645 620,640 650,655 665,690 682,750 697,795 710,830 725,842 745,830 770,800 800,765 820,745 860,722 895,710 910,680 928,630 950,603 970,608 985,630 1000,648'],
[820,475,'0,625 30,608 65,592 90,595 115,612 150,640 175,648 190,635 205,608 220,625 240,660 260,690 285,702 305,680 322,645 345,615 375,605 400,612 430,632 450,608 480,590 500,592 520,605 540,620 570,612 610,622 640,638 660,655 680,685 710,702 735,685 750,640 765,608 785,590 810,587 825,600 840,613']]);
const pos = [], neg = [];
for (const x of steps) {
  const y = at(hist, x);
  if (y < 694) pos.push([x, y, 695]);
  else neg.push([x, 694, Math.max(y, 696)]);
}
const macd = document.getElementById('macd');
add(macd, 'grid', hline([652, 694, 737]));
add(macd, 'up', bars(pos));
add(macd, 'down', bars(neg));
add(macd, 'l-white', line(diff));
add(macd, 'l-yellow', line(dea));
```
